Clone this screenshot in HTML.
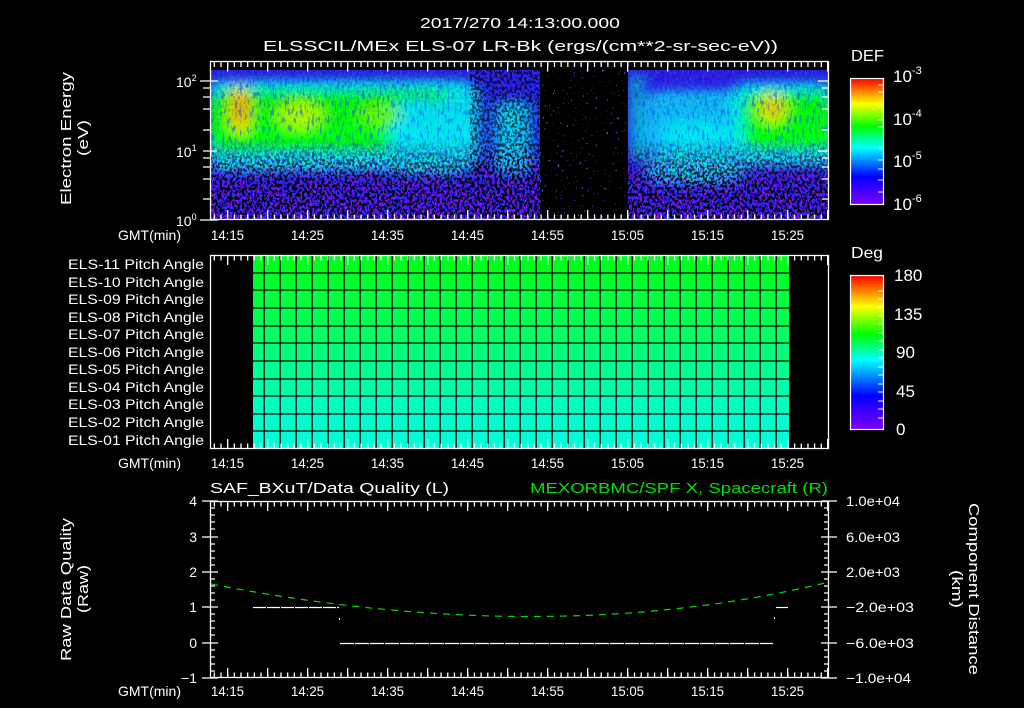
<!DOCTYPE html>
<html><head><meta charset="utf-8"><style>
html,body{margin:0;padding:0;background:#000;}
svg{display:block}
text{font-family:"Liberation Sans",sans-serif;fill:#fff;font-size:14px}
</style></head><body>
<svg width="1024" height="708" viewBox="0 0 1024 708" xmlns="http://www.w3.org/2000/svg">
<defs>
<linearGradient id="cb" x1="0" y1="1" x2="0" y2="0">
<stop offset="0" stop-color="#8000ff"/><stop offset="0.22" stop-color="#0000ff"/><stop offset="0.45" stop-color="#00ffff"/><stop offset="0.62" stop-color="#00ff00"/><stop offset="0.8" stop-color="#ffff00"/><stop offset="1" stop-color="#ff0000"/>
</linearGradient>
<filter id="bl" x="-30%" y="-30%" width="160%" height="160%"><feGaussianBlur stdDeviation="7 5"/></filter>
<filter id="spk" x="0" y="0" width="100%" height="100%"><feTurbulence type="fractalNoise" baseFrequency="0.4 0.32" numOctaves="2" seed="3"/><feColorMatrix type="matrix" values="0 0 0 0 0 0 0 0 0 0 0 0 0 0 0 0 0 0 14 -6.8"/></filter>
<filter id="spkb" x="0" y="0" width="100%" height="100%"><feTurbulence type="fractalNoise" baseFrequency="0.4 0.32" numOctaves="2" seed="9"/><feColorMatrix type="matrix" values="0 0 0 0 0.5 0 0 0 0 0 0 0 0 0 1 0 0 0 14 -7.4"/></filter>
<filter id="spk3" x="0" y="0" width="100%" height="100%"><feTurbulence type="fractalNoise" baseFrequency="0.45 0.4" numOctaves="2" seed="11"/><feColorMatrix type="matrix" values="0 0 0 0 0.25 0 0 0 0 0.1 0 0 0 0 1 0 0 0 25 -18.5"/></filter>
<filter id="spk5" x="0" y="0" width="100%" height="100%"><feTurbulence type="fractalNoise" baseFrequency="0.4 0.12" numOctaves="2" seed="5"/><feColorMatrix type="matrix" values="0 0 0 0 0 0 0 0 0 0.1 0 0 0 0 1 0 0 0 14 -8.2"/></filter>
<linearGradient id="mg" x1="0" y1="70" x2="0" y2="220" gradientUnits="userSpaceOnUse">
<stop offset="0" stop-color="#fff" stop-opacity="0.2"/><stop offset="0.45" stop-color="#fff" stop-opacity="0"/><stop offset="0.62" stop-color="#fff" stop-opacity="0.6"/><stop offset="0.8" stop-color="#fff" stop-opacity="1"/><stop offset="1" stop-color="#fff" stop-opacity="1"/>
</linearGradient>
<mask id="m1"><rect x="210" y="70" width="620" height="150" fill="url(#mg)"/></mask>
<clipPath id="c1"><rect x="211" y="70" width="617" height="149"/></clipPath>
</defs>

<text x="420" y="28" textLength="200" lengthAdjust="spacingAndGlyphs" style="font-size:15px">2017/270 14:13:00.000</text>
<text x="263" y="51" textLength="515" lengthAdjust="spacingAndGlyphs" style="font-size:15px">ELSSCIL/MEx ELS-07 LR-Bk  (ergs/(cm**2-sr-sec-eV))</text>

<g clip-path="url(#c1)">
<rect x="210" y="70" width="620" height="150" fill="#2a20f0"/>
<g filter="url(#bl)">
<rect x="205" y="80" width="275" height="92" rx="20" fill="#00f0f0"/>
<rect x="205" y="90" width="250" height="62" rx="20" fill="#00ff10"/>
<rect x="390" y="100" width="80" height="75" rx="15" fill="#00e8f0"/>
<ellipse cx="240" cy="110" rx="9" ry="25" fill="#ffd000"/>
<ellipse cx="240" cy="108" rx="4" ry="14" fill="#ff6000"/>
<ellipse cx="300" cy="115" rx="22" ry="15" fill="#a8ff00"/>
<ellipse cx="380" cy="115" rx="20" ry="12" fill="#60ff00"/>
<rect x="494" y="100" width="38" height="75" rx="10" fill="#00d8f8"/>
<rect x="632" y="75" width="10" height="85" fill="#00f0c0"/>
<rect x="645" y="90" width="100" height="95" rx="15" fill="#10c0f8"/>
<rect x="665" y="120" width="60" height="60" rx="15" fill="#00e8f0"/>
<rect x="728" y="82" width="110" height="85" rx="20" fill="#00f0f0"/>
<rect x="742" y="92" width="95" height="58" rx="15" fill="#00ff10"/>
<ellipse cx="772" cy="108" rx="14" ry="16" fill="#d0ff00"/>
<ellipse cx="773" cy="108" rx="5" ry="9" fill="#ff9000"/>
</g>
<rect x="210" y="70" width="620" height="150" filter="url(#spk5)" opacity="0.5"/>
<rect x="210" y="70" width="620" height="150" filter="url(#spkb)" mask="url(#m1)" opacity="0.8"/>
<rect x="210" y="70" width="620" height="150" filter="url(#spk)" mask="url(#m1)"/>
<rect x="470" y="70" width="70" height="150" filter="url(#spk)" opacity="0.6"/>
<rect x="540" y="70" width="88" height="150" fill="#000"/>
<rect x="540" y="70" width="88" height="150" filter="url(#spk3)"/>
</g>

<g stroke="#fff">
<path d="M213.67 64.5H829" stroke-width="5" stroke-dasharray="1.3 5.37"/>
<path d="M227 66.5H829" stroke-width="10" stroke-dasharray="1.3 38.7"/>
<path d="M213.67 217H829" stroke-width="5" stroke-dasharray="1.3 5.37"/>
<path d="M227 215H829" stroke-width="10" stroke-dasharray="1.3 38.7"/>
<path d="M213.67 504H829" stroke-width="5" stroke-dasharray="1.3 5.37"/>
<path d="M227 506H829" stroke-width="10" stroke-dasharray="1.3 38.7"/>
<path d="M213.67 675H829" stroke-width="5" stroke-dasharray="1.3 5.37"/>
<path d="M227 673H829" stroke-width="10" stroke-dasharray="1.3 38.7"/>
</g>

<rect x="210.5" y="61.5" width="618" height="158" fill="none" stroke="#fff" stroke-width="1.3"/>
<g stroke="#fff" stroke-width="1.3">
<path d="M200 81H218M203 151H217M200 220H218M203 88H210M203 97H210M203 109H210M203 130H210M203 158H210M203 167H210M203 179H210M203 199H210"/>
<path d="M829 81H818M829 151H818M829 88H822M829 97H822M829 109H822M829 130H822M829 158H822M829 167H822M829 179H822M829 199H822"/>
</g>
<text x="176" y="87" style="font-size:14px">10<tspan dy="-6" style="font-size:9px">2</tspan></text>
<text x="176" y="157" style="font-size:14px">10<tspan dy="-6" style="font-size:9px">1</tspan></text>
<text x="176" y="226" style="font-size:14px">10<tspan dy="-6" style="font-size:9px">0</tspan></text>
<text transform="translate(71,205) rotate(-90)" textLength="133" lengthAdjust="spacingAndGlyphs" style="font-size:15px">Electron Energy</text>
<text transform="translate(88,156) rotate(-90)" textLength="36" lengthAdjust="spacingAndGlyphs" style="font-size:15px">(eV)</text>
<g style="font-size:14px">
<text x="118" y="240" textLength="63" lengthAdjust="spacingAndGlyphs">GMT(min)</text>
<text x="211" y="240" textLength="33" lengthAdjust="spacingAndGlyphs">14:15</text><text x="291" y="240" textLength="33" lengthAdjust="spacingAndGlyphs">14:25</text><text x="371" y="240" textLength="33" lengthAdjust="spacingAndGlyphs">14:35</text><text x="451" y="240" textLength="33" lengthAdjust="spacingAndGlyphs">14:45</text><text x="531" y="240" textLength="33" lengthAdjust="spacingAndGlyphs">14:55</text><text x="611" y="240" textLength="33" lengthAdjust="spacingAndGlyphs">15:05</text><text x="691" y="240" textLength="33" lengthAdjust="spacingAndGlyphs">15:15</text><text x="771" y="240" textLength="33" lengthAdjust="spacingAndGlyphs">15:25</text>
</g>
<text x="851" y="61" textLength="33" lengthAdjust="spacingAndGlyphs" style="font-size:16px">DEF</text>
<rect x="850.5" y="78.5" width="33" height="126" fill="url(#cb)" stroke="#fff" stroke-width="1.2"/>
<path d="M883 85H878M883 92H878M883 107H878M883 120H878M883 127H878M883 148H878M883 160H878M883 169H878M883 180H878M883 192H878" stroke="#fff"/>
<text x="893" y="82" style="font-size:17px">10<tspan dy="-8" style="font-size:11px">-3</tspan></text>
<text x="893" y="125" style="font-size:17px">10<tspan dy="-8" style="font-size:11px">-4</tspan></text>
<text x="893" y="167" style="font-size:17px">10<tspan dy="-8" style="font-size:11px">-5</tspan></text>
<text x="893" y="210" style="font-size:17px">10<tspan dy="-8" style="font-size:11px">-6</tspan></text>

<g>
<rect x="253" y="255" width="536" height="18" fill="#00ff20"/>
<rect x="253" y="273" width="536" height="17" fill="#00ff2c"/>
<rect x="253" y="290" width="536" height="18" fill="#00ff3c"/>
<rect x="253" y="308" width="536" height="18" fill="#00ff50"/>
<rect x="253" y="326" width="536" height="17" fill="#00ff64"/>
<rect x="253" y="343" width="536" height="18" fill="#00ff7c"/>
<rect x="253" y="361" width="536" height="18" fill="#00ff94"/>
<rect x="253" y="379" width="536" height="17" fill="#00ffac"/>
<rect x="253" y="396" width="536" height="18" fill="#00ffc2"/>
<rect x="253" y="414" width="536" height="17" fill="#00ffd0"/>
<rect x="253" y="431" width="536" height="18" fill="#00ffd8"/>
<path d="M253 273H789M253 290H789M253 308H789M253 326H789M253 343H789M253 361H789M253 379H789M253 396H789M253 414H789M253 431H789" stroke="#000" stroke-width="1.3"/>
<line x1="263.5" y1="352" x2="789" y2="352" stroke="#000" stroke-width="194" stroke-dasharray="1.3 14.7"/>
</g>
<rect x="210.5" y="255.5" width="618" height="193" fill="none" stroke="#fff" stroke-width="1.3"/>
<g stroke="#fff">
<path d="M213.67 258H829" stroke-width="5" stroke-dasharray="1.3 5.37"/>
<path d="M227 260H829" stroke-width="10" stroke-dasharray="1.3 38.7"/>
<path d="M213.67 446H829" stroke-width="5" stroke-dasharray="1.3 5.37"/>
<path d="M227 444H829" stroke-width="10" stroke-dasharray="1.3 38.7"/>
</g>
<g style="font-size:13px">
<text x="68" y="269" textLength="136" lengthAdjust="spacingAndGlyphs">ELS-11 Pitch Angle</text><text x="68" y="287" textLength="136" lengthAdjust="spacingAndGlyphs">ELS-10 Pitch Angle</text><text x="68" y="304" textLength="136" lengthAdjust="spacingAndGlyphs">ELS-09 Pitch Angle</text><text x="68" y="322" textLength="136" lengthAdjust="spacingAndGlyphs">ELS-08 Pitch Angle</text><text x="68" y="339" textLength="136" lengthAdjust="spacingAndGlyphs">ELS-07 Pitch Angle</text><text x="68" y="357" textLength="136" lengthAdjust="spacingAndGlyphs">ELS-06 Pitch Angle</text><text x="68" y="374" textLength="136" lengthAdjust="spacingAndGlyphs">ELS-05 Pitch Angle</text><text x="68" y="392" textLength="136" lengthAdjust="spacingAndGlyphs">ELS-04 Pitch Angle</text><text x="68" y="409" textLength="136" lengthAdjust="spacingAndGlyphs">ELS-03 Pitch Angle</text><text x="68" y="427" textLength="136" lengthAdjust="spacingAndGlyphs">ELS-02 Pitch Angle</text><text x="68" y="445" textLength="136" lengthAdjust="spacingAndGlyphs">ELS-01 Pitch Angle</text>
</g>
<g style="font-size:14px">
<text x="118" y="468" textLength="63" lengthAdjust="spacingAndGlyphs">GMT(min)</text>
<text x="211" y="468" textLength="33" lengthAdjust="spacingAndGlyphs">14:15</text><text x="291" y="468" textLength="33" lengthAdjust="spacingAndGlyphs">14:25</text><text x="371" y="468" textLength="33" lengthAdjust="spacingAndGlyphs">14:35</text><text x="451" y="468" textLength="33" lengthAdjust="spacingAndGlyphs">14:45</text><text x="531" y="468" textLength="33" lengthAdjust="spacingAndGlyphs">14:55</text><text x="611" y="468" textLength="33" lengthAdjust="spacingAndGlyphs">15:05</text><text x="691" y="468" textLength="33" lengthAdjust="spacingAndGlyphs">15:15</text><text x="771" y="468" textLength="33" lengthAdjust="spacingAndGlyphs">15:25</text>
</g>
<text x="851" y="258" textLength="32" lengthAdjust="spacingAndGlyphs" style="font-size:16px">Deg</text>
<rect x="850.5" y="275.5" width="33" height="154" fill="url(#cb)" stroke="#fff" stroke-width="1.2"/>
<path d="M883 291H878M883 299H878M883 307H878M883 316H878M883 324H878M883 333H878M883 341H878M883 350H878M883 358H878M883 367H878M883 375H878M883 384H878M883 392H878M883 401H878M883 409H878M883 418H878" stroke="#fff"/>
<text x="894" y="281" style="font-size:17px">180</text><text x="894" y="320" style="font-size:17px">135</text><text x="896" y="358" style="font-size:17px">90</text><text x="896" y="397" style="font-size:17px">45</text><text x="896" y="435" style="font-size:17px">0</text>

<text x="210" y="493" textLength="239" lengthAdjust="spacingAndGlyphs" style="font-size:15px">SAF_BXuT/Data Quality (L)</text>
<text x="530" y="493" textLength="298" lengthAdjust="spacingAndGlyphs" style="font-size:15px;fill:#00e000">MEXORBMC/SPF X, Spacecraft (R)</text>
<rect x="210.5" y="501.5" width="618" height="176" fill="none" stroke="#fff" stroke-width="1.3"/>
<g stroke="#fff" stroke-width="1.3">
<path d="M202 501H218M202 537H218M202 572H218M202 607H218M202 643H218M202 678H218"/>
<path d="M210 508H215M210 515H215M210 522H215M210 529H215M210 544H215M210 551H215M210 558H215M210 565H215M210 579H215M210 586H215M210 593H215M210 600H215M210 614H215M210 621H215M210 628H215M210 635H215M210 650H215M210 657H215M210 664H215M210 671H215"/>
<path d="M837 501H821M837 537H821M837 572H821M837 607H821M837 643H821M837 678H821"/>
<path d="M829 508H824M829 515H824M829 522H824M829 529H824M829 544H824M829 551H824M829 558H824M829 565H824M829 579H824M829 586H824M829 593H824M829 600H824M829 614H824M829 621H824M829 628H824M829 635H824M829 650H824M829 657H824M829 664H824M829 671H824"/>
</g>
<g text-anchor="end" style="font-size:14px"><text x="197" y="506" style="font-size:14px">4</text><text x="197" y="542" style="font-size:14px">3</text><text x="197" y="577" style="font-size:14px">2</text><text x="197" y="612" style="font-size:14px">1</text><text x="197" y="648" style="font-size:14px">0</text><text x="197" y="683" style="font-size:14px">−1</text></g>
<text x="846" y="506" textLength="54" lengthAdjust="spacingAndGlyphs" style="font-size:14px">1.0e+04</text>
<text x="846" y="542" textLength="54" lengthAdjust="spacingAndGlyphs" style="font-size:14px">6.0e+03</text>
<text x="846" y="577" textLength="54" lengthAdjust="spacingAndGlyphs" style="font-size:14px">2.0e+03</text>
<text x="846" y="612" textLength="68" lengthAdjust="spacingAndGlyphs" style="font-size:14px">−2.0e+03</text>
<text x="846" y="648" textLength="68" lengthAdjust="spacingAndGlyphs" style="font-size:14px">−6.0e+03</text>
<text x="846" y="683" textLength="65" lengthAdjust="spacingAndGlyphs" style="font-size:14px">−1.0e+04</text>
<text transform="translate(71,661) rotate(-90)" textLength="143" lengthAdjust="spacingAndGlyphs" style="font-size:15px">Raw Data Quality</text>
<text transform="translate(88,613) rotate(-90)" textLength="48" lengthAdjust="spacingAndGlyphs" style="font-size:15px">(Raw)</text>
<text transform="translate(969,503) rotate(90)" textLength="172" lengthAdjust="spacingAndGlyphs" style="font-size:15px">Component Distance</text>
<text transform="translate(952,570) rotate(90)" textLength="38" lengthAdjust="spacingAndGlyphs" style="font-size:15px">(km)</text>
<path d="M211 584 Q550 650 829 582" fill="none" stroke="#00e000" stroke-width="1.2" stroke-dasharray="7 6"/>
<path d="M253 607.5H339" stroke="#fff" stroke-width="1.2" stroke-dasharray="13 1"/>
<path d="M340 643.5H773" stroke="#fff" stroke-width="1.2" stroke-dasharray="14 1"/>
<path d="M776 607.5H788" stroke="#fff" stroke-width="1.2"/>
<rect x="339" y="618" width="1" height="2" fill="#fff"/><rect x="774" y="617" width="1" height="2" fill="#fff"/>
<g style="font-size:14px">
<text x="118" y="696" textLength="63" lengthAdjust="spacingAndGlyphs">GMT(min)</text>
<text x="211" y="696" textLength="33" lengthAdjust="spacingAndGlyphs">14:15</text><text x="291" y="696" textLength="33" lengthAdjust="spacingAndGlyphs">14:25</text><text x="371" y="696" textLength="33" lengthAdjust="spacingAndGlyphs">14:35</text><text x="451" y="696" textLength="33" lengthAdjust="spacingAndGlyphs">14:45</text><text x="531" y="696" textLength="33" lengthAdjust="spacingAndGlyphs">14:55</text><text x="611" y="696" textLength="33" lengthAdjust="spacingAndGlyphs">15:05</text><text x="691" y="696" textLength="33" lengthAdjust="spacingAndGlyphs">15:15</text><text x="771" y="696" textLength="33" lengthAdjust="spacingAndGlyphs">15:25</text>
</g>
</svg>
</body></html>
